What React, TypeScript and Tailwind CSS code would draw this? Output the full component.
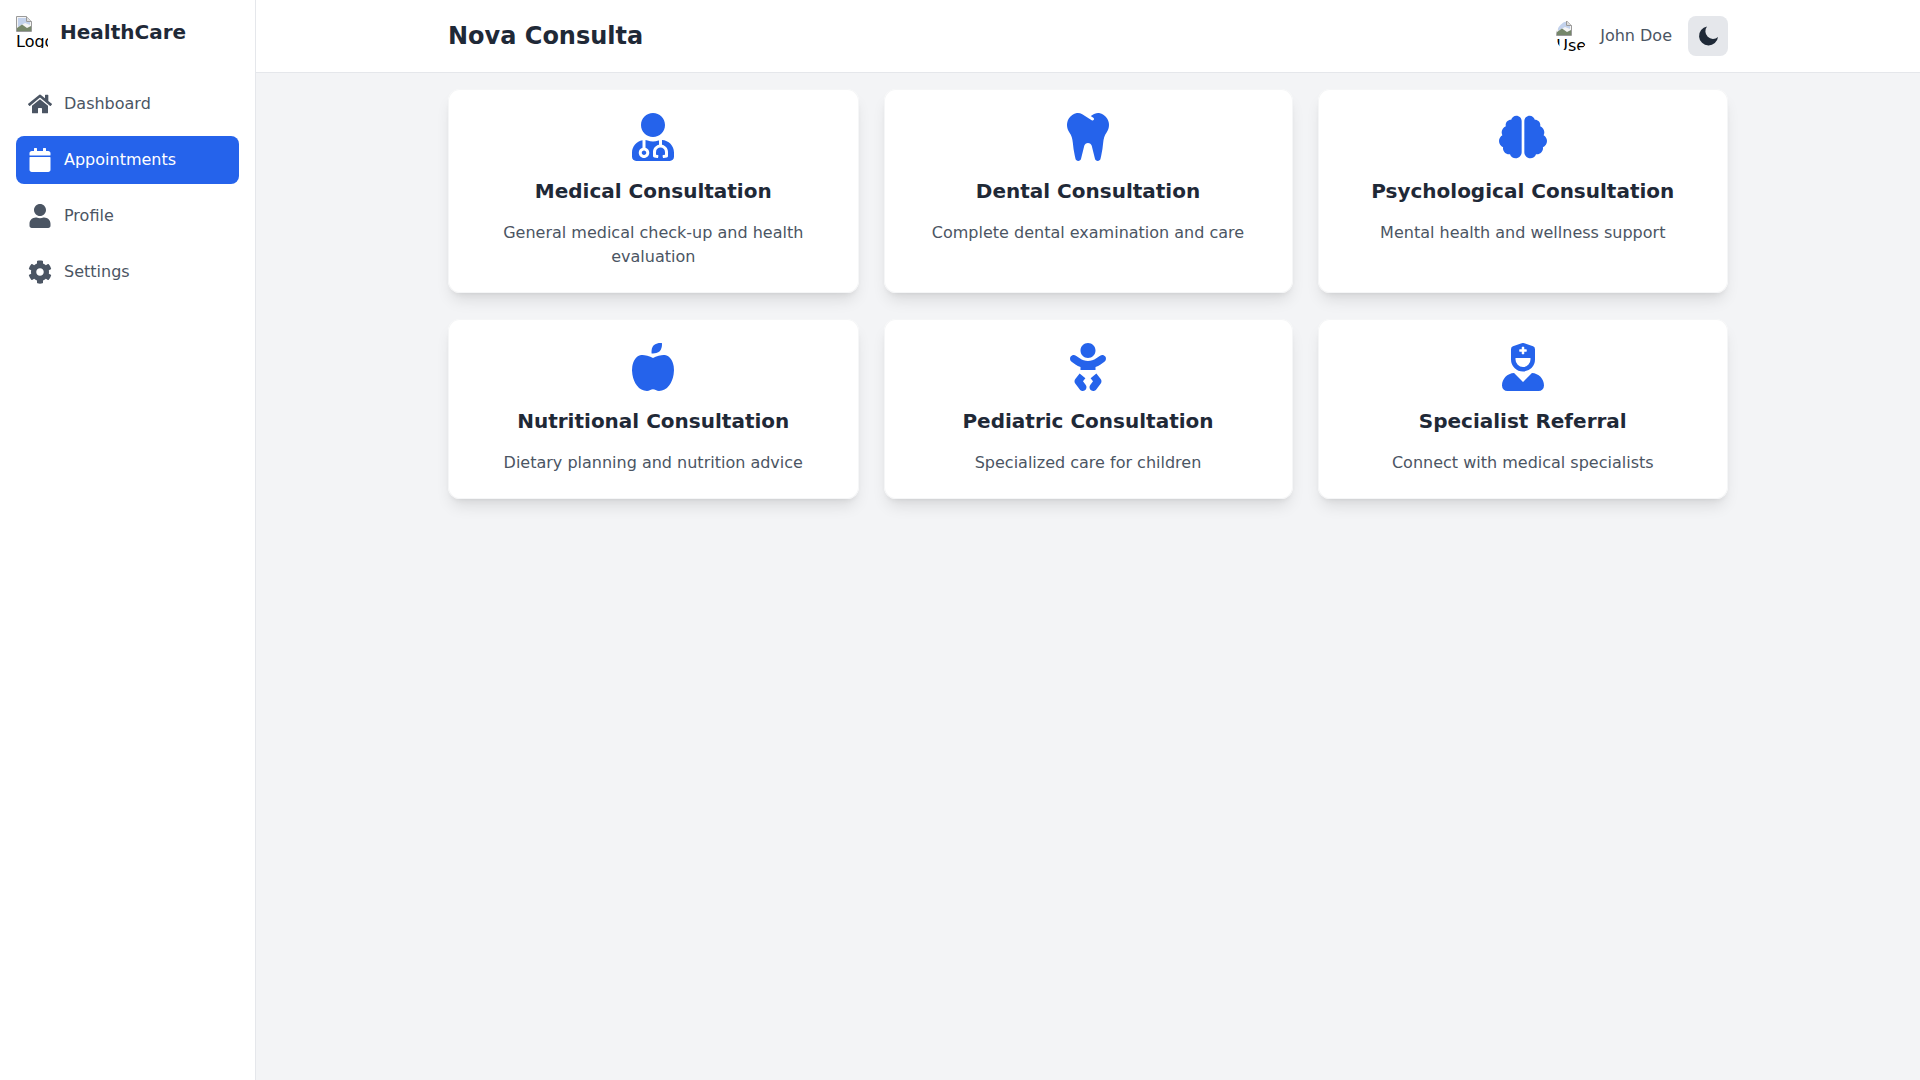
import { FaHome, FaCalendar, FaUser, FaCog, FaUserMd, FaTooth, FaBrain, FaAppleAlt, FaBaby, FaUserNurse } from "react-icons/fa";
import type { IconType } from "react-icons";

const navItems: { label: string; icon: IconType; active?: boolean }[] = [
  { label: "Dashboard", icon: FaHome },
  { label: "Appointments", icon: FaCalendar, active: true },
  { label: "Profile", icon: FaUser },
  { label: "Settings", icon: FaCog },
];

const consultations: { title: string; description: string; icon: IconType }[] = [
  { title: "Medical Consultation", description: "General medical check-up and health evaluation", icon: FaUserMd },
  { title: "Dental Consultation", description: "Complete dental examination and care", icon: FaTooth },
  { title: "Psychological Consultation", description: "Mental health and wellness support", icon: FaBrain },
  { title: "Nutritional Consultation", description: "Dietary planning and nutrition advice", icon: FaAppleAlt },
  { title: "Pediatric Consultation", description: "Specialized care for children", icon: FaBaby },
  { title: "Specialist Referral", description: "Connect with medical specialists", icon: FaUserNurse },
];

// what the browser paints for an image that failed to load
const BrokenImage = ({ alt, round }: { alt: string; round?: boolean }) => (
  <div className={`w-8 h-8 overflow-hidden shrink-0 text-black leading-[20px] ${round ? "rounded-full" : ""}`}>
    <svg width="16" height="16" viewBox="0 0 16 16" className="block">
      <path d="M0.5 0.5H10.5L15.5 5.5V15.5H0.5Z" fill="#f4f4f4" stroke="#9a9a9a" />
      <path d="M10.5 0.5V5.5H15.5" fill="#dcdcdc" stroke="#9a9a9a" />
      <path d="M2 2H10V6H14V9L9 7L2 11Z" fill="#c3d2ec" />
      <path d="M1 15V12L6 8.5L11 12L15 10V15Z" fill="#76876a" />
    </svg>
    {alt}
  </div>
);

export default function App() {
  return (
    <div className="flex min-h-screen bg-[#f3f4f6] font-['DejaVu_Sans',sans-serif] text-base">
      <aside className="w-64 shrink-0 bg-white border-r border-[#e5e7eb] p-4">
        <div className="flex items-center gap-3 h-8 mb-8">
          <BrokenImage alt="Logo" />
          <span className="text-xl font-bold text-[#1f2937]">HealthCare</span>
        </div>
        <nav className="flex flex-col gap-2">
          {navItems.map(({ label, icon: Icon, active }) => (
            <a
              key={label}
              className={`flex items-center gap-3 h-12 px-3 rounded-lg ${active ? "bg-[#2563eb] text-white" : "text-[#4b5563]"}`}
            >
              <span className="w-6 flex justify-center">
                <Icon size={24} />
              </span>
              {label}
            </a>
          ))}
        </nav>
      </aside>

      <div className="flex-1 flex flex-col">
        <header className="h-[73px] bg-white border-b border-[#e5e7eb]">
          <div className="w-[1280px] h-full mx-auto flex items-center justify-between">
            <h1 className="text-2xl font-bold text-[#1f2937]">Nova Consulta</h1>
            <div className="flex items-center gap-4">
              <div className="flex items-center gap-3">
                <BrokenImage alt="User" round />
                <span className="text-[#4b5563]">John Doe</span>
              </div>
              <button className="w-10 h-10 rounded-lg bg-[#e5e7eb] text-[#1f2937] flex items-center justify-center">
                <svg width="20" height="20" viewBox="0 0 20 20" fill="currentColor">
                  <path d="M9 0.6A9.5 9.5 0 1 0 20 11A7.6 7.6 0 0 1 9 0.6Z" />
                </svg>
              </button>
            </div>
          </div>
        </header>

        <main className="p-4">
          <div className="w-[1280px] mx-auto grid grid-cols-[410.5px_1fr_410.5px] gap-x-[25px] gap-y-[26px]">
            {consultations.map(({ title, description, icon: Icon }) => (
              <div
                key={title}
                className="bg-white rounded-xl inset-ring inset-ring-[#f5f6f7] shadow-lg p-6 text-center flex flex-col items-center"
              >
                <Icon size={48} className="text-[#2563eb] mb-4" />
                <h3 className="text-xl font-semibold text-[#1f2937] mb-4">{title}</h3>
                <p className="text-[#4b5563]">{description}</p>
              </div>
            ))}
          </div>
        </main>
      </div>
    </div>
  );
}
